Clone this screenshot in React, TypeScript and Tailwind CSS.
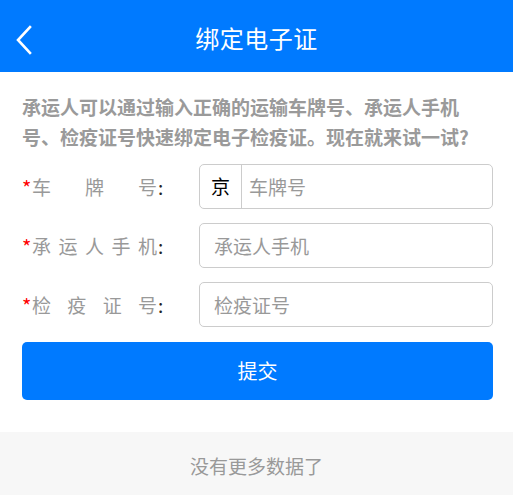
import React, { useState } from 'react';

const FONT = { fontFamily: '"Noto Sans CJK SC", "Noto Sans", sans-serif' };

const Label: React.FC<{ text: string }> = ({ text }) => (
  <div className="flex items-center w-[177px] shrink-0">
    <span className="text-[#ff0000] text-[20px] leading-none self-start mt-[4px] w-[10px]">*</span>
    <span className="w-[125px] text-[19px] text-[#999] leading-[26px] [text-align:justify] [text-align-last:justify]">
      {text}
    </span>
    <span className="text-[19px] text-[#222] leading-[26px] ml-[1px]">:</span>
  </div>
);

const App: React.FC = () => {
  const [plate, setPlate] = useState('');
  const [phone, setPhone] = useState('');
  const [cert, setCert] = useState('');

  return (
    <div style={FONT} className="w-[513px] h-[500px] bg-white flex flex-col">
      <header className="h-[72px] bg-[#007aff] flex items-center justify-center relative shrink-0">
        <button className="absolute left-[12px] top-[24px] w-[24px] h-[32px] flex items-center justify-center">
          <svg width="18" height="30" viewBox="0 0 18 30" fill="none">
            <polyline points="15,2 3,15 15,28" stroke="#fff" strokeWidth="2.6" strokeLinecap="square" />
          </svg>
        </button>
        <h1 className="text-white text-[24px] font-normal mt-[3px] tracking-[0.5px]">绑定电子证</h1>
      </header>

      <div className="pl-[22px] pr-[20px] pt-[20px]">
        <p className="text-[19px] font-bold text-[#9a9a9a] leading-[30px]">
          承运人可以通过输入正确的运输车牌号、承运人手机号、检疫证号快速绑定电子检疫证。现在就来试一试?
        </p>

        <div className="mt-[12px] flex flex-col gap-[14px]">
          <div className="flex items-center">
            <Label text="车牌号" />
            <div className="flex-1 h-[45px] border border-[#cccccc] rounded-[5px] flex items-center">
              <span className="w-[42px] h-full border-r border-[#cccccc] flex items-center justify-center text-[19px] text-black">京</span>
              <input
                value={plate}
                onChange={(e) => setPlate(e.target.value)}
                placeholder="车牌号"
                className="flex-1 min-w-0 h-full pl-[7px] text-[19px] outline-none bg-transparent placeholder:text-[#999]"
              />
            </div>
          </div>

          <div className="flex items-center">
            <Label text="承运人手机" />
            <input
              value={phone}
              onChange={(e) => setPhone(e.target.value)}
              placeholder="承运人手机"
              className="flex-1 min-w-0 h-[45px] border border-[#cccccc] rounded-[5px] px-[14px] text-[19px] outline-none placeholder:text-[#999]"
            />
          </div>

          <div className="flex items-center">
            <Label text="检疫证号" />
            <input
              value={cert}
              onChange={(e) => setCert(e.target.value)}
              placeholder="检疫证号"
              className="flex-1 min-w-0 h-[45px] border border-[#cccccc] rounded-[5px] px-[14px] text-[19px] outline-none placeholder:text-[#999]"
            />
          </div>
        </div>

        <button className="mt-[15px] w-full h-[58px] bg-[#007aff] rounded-[5px] text-white text-[20px]">
          提交
        </button>
      </div>

      <div className="mt-[32px] h-[63px] bg-[#f7f7f7] flex items-center justify-center shrink-0">
        <span className="text-[19px] text-[#999] mt-[6px]">没有更多数据了</span>
      </div>
    </div>
  );
};

export default App;
